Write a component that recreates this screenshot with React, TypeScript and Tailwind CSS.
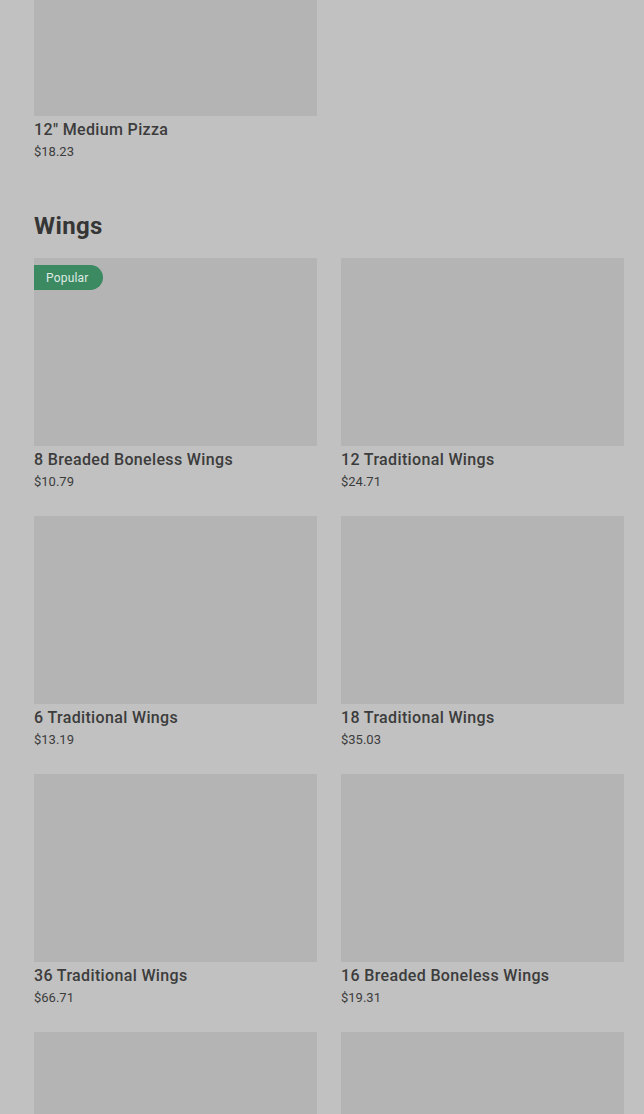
import React from 'react'

interface Item {
  name: string
  price: string
  popular?: boolean
}

const wings: Item[] = [
  { name: '8 Breaded Boneless Wings', price: '$10.79', popular: true },
  { name: '12 Traditional Wings', price: '$24.71' },
  { name: '6 Traditional Wings', price: '$13.19' },
  { name: '18 Traditional Wings', price: '$35.03' },
  { name: '36 Traditional Wings', price: '$66.71' },
  { name: '16 Breaded Boneless Wings', price: '$19.31' },
  { name: '', price: '' },
  { name: '', price: '' },
]

const ItemCard: React.FC<{ item: Item }> = ({ item }) => (
  <div className="flex flex-col">
    <div className="relative h-[188px] bg-[#b4b4b4]">
      {item.popular && (
        <span className="absolute left-0 top-[7px] h-[25px] pl-3 pr-[14px] flex items-center rounded-r-full bg-[#3b8a62] text-[#dfe9e3] text-[12px] tracking-[0.2px]">
          Popular
        </span>
      )}
    </div>
    <div className="mt-[3px] text-[16px] leading-[22px] font-medium tracking-[0.35px] text-[#3c3c3c]">{item.name}</div>
    <div className="mt-[1px] text-[13px] leading-[20px] text-[#3c3c3c]">{item.price}</div>
  </div>
)

export default function App() {
  return (
    <div
      className="h-[1114px] overflow-hidden bg-[#c1c1c1] pl-[34px] pr-[20px]"
      style={{ fontFamily: 'Roboto, "Liberation Sans", sans-serif' }}
    >
      <div className="-mt-[72px] grid grid-cols-2 gap-x-6">
        <ItemCard item={{ name: '12" Medium Pizza', price: '$18.23' }} />
      </div>

      <h2 className="mt-12 text-[24px] leading-[32px] font-bold text-[#363636] tracking-[0.4px]">Wings</h2>

      <div className="mt-4 grid grid-cols-2 gap-x-6 gap-y-6">
        {wings.map((item, i) => (
          <ItemCard key={i} item={item} />
        ))}
      </div>
    </div>
  )
}
